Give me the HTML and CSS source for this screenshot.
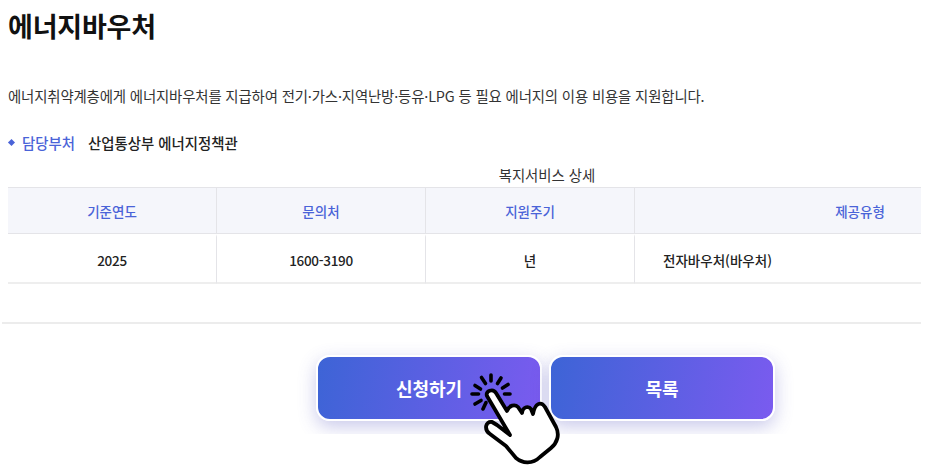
FILE: index.html
```html
<!DOCTYPE html>
<html lang="ko">
<head>
  <meta charset="UTF-8" />
  <meta name="viewport" content="width=device-width, initial-scale=1" />
  <title>에너지바우처</title>
  <link rel="stylesheet" href="styles.css">
</head>
<body>
  <div class="page">
    <h1 class="title">에너지바우처</h1>
    <p class="desc">에너지취약계층에게 에너지바우처를 지급하여 전기·가스·지역난방·등유·LPG 등 필요 에너지의 이용 비용을 지원합니다.</p>

    <div class="dept">
      <span class="dept-dot"></span>
      <span class="dept-label">담당부처</span>
      <span class="dept-name">산업통상부 에너지정책관</span>
    </div>

    <div class="table-wrap">
      <table class="detail">
        <caption>복지서비스 상세</caption>
        <thead>
          <tr>
            <th class="col-1">기준연도</th>
            <th class="col-2">문의처</th>
            <th class="col-3">지원주기</th>
            <th>제공유형</th>
          </tr>
        </thead>
        <tbody>
          <tr>
            <td class="num">2025</td>
            <td class="num">1600-3190</td>
            <td>년</td>
            <td class="left">전자바우처(바우처)</td>
          </tr>
        </tbody>
      </table>
    </div>

    <hr class="line">

    <div class="actions">
      <a class="btn" href="#">신청하기</a>
      <a class="btn" href="#">목록</a>
    </div>

    <!-- pointer over the apply button -->
    <svg class="hand" width="110" height="105" viewBox="0 0 110 105" fill="none" stroke="#000" stroke-linecap="round" stroke-linejoin="round">
      <g stroke-width="3.600">
        <path d="M31 10V16"/>
        <path d="M21.500 12.500L25.500 18.500"/>
        <path d="M41 13L37.500 18.500"/>
        <path d="M15 20.500L20.500 24"/>
        <path d="M48 19.500L42.500 23"/>
        <path d="M12 29H18.500"/>
        <path d="M50 29H44.500"/>
        <path d="M15 39L21 35.500"/>
        <path d="M26 37.500L23 44"/>
      </g>
      <path fill="#fff" stroke-width="3.800" d="M27 31C25 26 33 23 36 28L47 46C49 40 55 39 58 42L62 48C63 41 69 41 71 44L73 49C75 38 81 36 85 42L96 62C100 70 97 78 91 83L80 92C72 100 62 98 56 93L46 81L30 69C24 65 25 56 32 57L37 60L50 70Z"/>
    </svg>
  </div>
</body>
</html>
```

FILE: styles.css
```css
* {
  box-sizing: border-box;
}

body {
  margin: 0;
  background: #fff;
  color: #222;
  font-family: "Noto Sans CJK KR", "Noto Sans", sans-serif;
}

.page {
  position: relative;
  width: 932px;
  height: 470px;
  padding: 0 11px 0 8px;
  overflow: hidden;
}

/* Heading */
.title {
  margin: 0;
  padding-top: 6px;
  height: 86px;
  font-size: 27px;
  line-height: 40px;
  font-weight: 700;
  letter-spacing: -0.2px;
  color: #111;
}

.desc {
  margin: 0;
  height: 34px;
  font-size: 14.4px;
  line-height: 20px;
  letter-spacing: -0.14px;
  color: #333;
}

/* Department */
.dept {
  display: flex;
  align-items: center;
  height: 20px;
  margin-top: 12px;
  font-size: 14.4px;
}

.dept-dot {
  width: 5px;
  height: 5px;
  margin-left: 1px;
  background: #4a63d8;
  transform: rotate(45deg);
}

.dept-label {
  margin-left: 8px;
  color: #4a63d8;
  font-weight: 500;
}

.dept-name {
  margin-left: 13px;
  color: #222;
  font-weight: 500;
}

/* Table runs wider than its box and gets cut off */
.table-wrap {
  width: 913px;
  margin-top: 12px;
  overflow: hidden;
}

.detail {
  width: 1078px;
  table-layout: fixed;
  border-collapse: separate;
  border-spacing: 0;
  font-size: 13.5px;
}

.detail caption {
  height: 23px;
  font-size: 14.4px;
  line-height: 22px;
  color: #333;
}

.detail th {
  height: 47px;
  background: #f5f6fb;
  border-top: 1px solid #e4e4e8;
  border-bottom: 1px solid #e4e4e8;
  border-right: 1px solid #e4e4e8;
  color: #4a63d8;
  font-weight: 500;
}

.detail td {
  height: 50px;
  padding: 0;
  text-align: center;
  border-top: 3px solid #fff;
  border-bottom: 2px solid #eee;
  border-right: 1px solid #e4e4e8;
  font-weight: 500;
  color: #222;
}

.detail td.num {
  letter-spacing: -0.3px;
}

.detail td.left {
  padding-left: 28px;
  text-align: left;
}

.col-1 {
  width: 209px;
}

.col-2 {
  width: 209px;
}

.col-3 {
  width: 209px;
}

.line {
  height: 2px;
  margin: 38px 0 0 -6px;
  border: 0;
  background: #ececec;
}

/* Buttons */
.actions {
  display: flex;
  gap: 7px;
  height: 110px;
  margin: 0 -11px 0 -8px;
  padding: 31px 0 0 316px;
  overflow: hidden;
}

.btn {
  display: flex;
  align-items: center;
  justify-content: center;
  width: 226px;
  height: 66px;
  border: 2px solid #fff;
  border-radius: 14px;
  background: linear-gradient(100deg, #3d64d6, #7a5bef);
  box-shadow: 0 6px 18px rgba(80, 80, 190, 0.3);
  color: #fff;
  font-size: 18px;
  font-weight: 700;
  text-decoration: none;
}

.hand {
  position: absolute;
  left: 460px;
  top: 365px;
}
```
